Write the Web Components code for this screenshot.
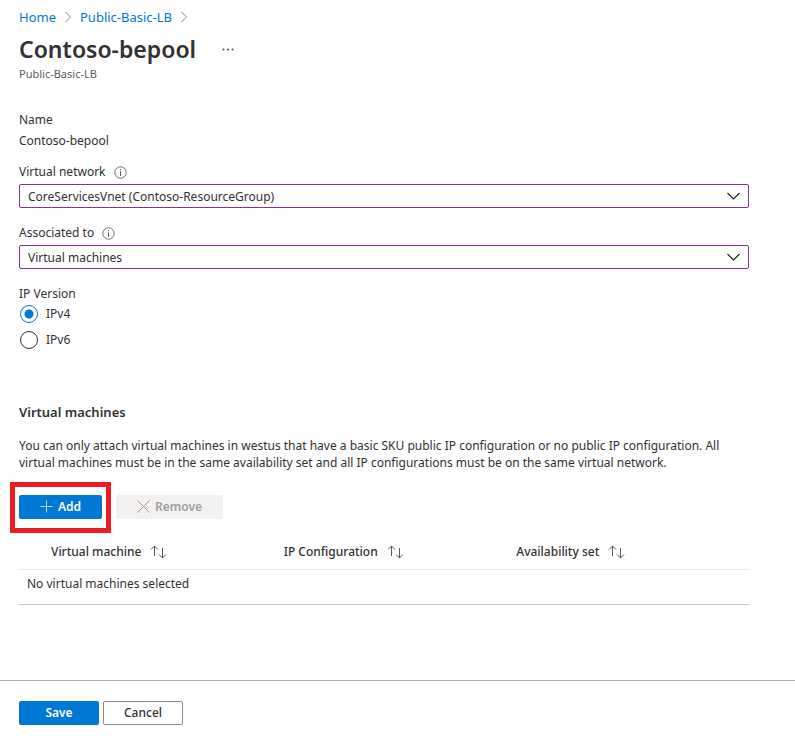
<!DOCTYPE html>
<html lang="en">
<head>
<meta charset="utf-8">
<title>Contoso-bepool</title>
<style>
  body { margin: 0; background: #fff; color: #323130; font: 12px/18px "Segoe UI", "Noto Sans", "Open Sans", sans-serif; }
</style>
</head>
<body>
<pool-page>
  <bread-crumbs slot="top" items="Home|Public-Basic-LB"></bread-crumbs>
  <page-title slot="top" subtitle="Public-Basic-LB">Contoso-bepool</page-title>
  <read-field label="Name">Contoso-bepool</read-field>
  <select-field label="Virtual network" value="CoreServicesVnet (Contoso-ResourceGroup)"></select-field>
  <select-field label="Associated to" value="Virtual machines"></select-field>
  <radio-field label="IP Version" options="IPv4|IPv6"></radio-field>
  <machine-section heading="Virtual machines">
    You can only attach virtual machines in westus that have a basic SKU public IP configuration or no public IP configuration. All virtual machines must be in the same availability set and all IP configurations must be on the same virtual network.
    <push-button slot="actions" kind="primary" icon="add" highlighted>Add</push-button>
    <push-button slot="actions" kind="off" icon="remove">Remove</push-button>
    <sort-table slot="table" columns="Virtual machine|IP Configuration|Availability set" empty="No virtual machines selected"></sort-table>
  </machine-section>
  <push-button slot="footer" kind="primary">Save</push-button>
  <push-button slot="footer" kind="outline">Cancel</push-button>
</pool-page>
<script>
class Base extends HTMLElement {
  connectedCallback() {
    if (!this.shadowRoot) this.attachShadow({ mode: "open" }).innerHTML = this.render();
  }
  list(name) { return this.getAttribute(name).split("|"); }
}

customElements.define("pool-page", class extends Base {
  render() {
    return `<style>
      :host { display: flex; flex-direction: column; min-height: 100vh; }
      header { padding: 8px 19px 0; }
      main { flex: 1; padding: 29px 46px 24px 19px; }
      footer { display: flex; gap: 4px; padding: 20px 19px 11px; border-top: 1px solid #b3b0ad; }
    </style>
    <header><slot name="top"></slot></header>
    <main><slot></slot></main>
    <footer><slot name="footer"></slot></footer>`;
  }
});

customElements.define("bread-crumbs", class extends Base {
  render() {
    const arrow = `<svg width="8" height="12" viewBox="0 0 8 12" fill="none" stroke="#8a8886" aria-hidden="true"><path d="M1.5 1 6.5 6l-5 5"/></svg>`;
    return `<style>
      :host { display: block; font-size: 13px; }
      nav { display: flex; align-items: center; gap: 8px; }
      a { color: #0078d4; text-decoration: none; }
    </style>
    <nav aria-label="Breadcrumb">${this.list("items").map(t => `<a href="#">${t}</a>${arrow}`).join("")}</nav>`;
  }
});

customElements.define("page-title", class extends Base {
  render() {
    return `<style>
      :host { display: block; padding-top: 7px; }
      div { display: flex; align-items: center; gap: 20px; margin-bottom: 1px; }
      h1 { margin: 0; font-size: 23px; line-height: 32px; font-weight: 600; }
      p { margin: 0; font-size: 11px; line-height: 16px; color: #605e5c; }
      button { display: flex; border: 0; padding: 6px; background: none; color: inherit; }
    </style>
    <div><h1><slot></slot></h1>
      <button aria-label="More"><svg width="12" height="4" viewBox="0 0 12 4" fill="#484644"><circle cx="1.5" cy="2.5" r="1"/><circle cx="6" cy="2.5" r="1"/><circle cx="10.5" cy="2.5" r="1"/></svg></button>
    </div>
    <p>${this.getAttribute("subtitle")}</p>`;
  }
});

customElements.define("read-field", class extends Base {
  render() {
    return `<style>
      :host { display: grid; gap: 3px; margin-bottom: 13px; }
    </style>
    <div>${this.getAttribute("label")}</div><div><slot></slot></div>`;
  }
});

customElements.define("select-field", class extends Base {
  render() {
    return `<style>
      :host { display: block; margin-bottom: 16px; }
      .label { display: flex; align-items: center; gap: 8px; margin-bottom: 3px; }
      .box { display: grid; align-items: center; }
      select, .box svg { grid-area: 1 / 1; }
      select { appearance: none; width: 100%; height: 24px; padding: 1px 32px 0 8px; margin: 0; border: 1px solid #8a2da5; border-radius: 2px; background: #fff; color: inherit; font: inherit; }
      .box svg { justify-self: end; margin-right: 8px; pointer-events: none; }
    </style>
    <div class="label"><label for="s">${this.getAttribute("label")}</label>
      <svg width="13" height="13" viewBox="0 0 13 13" fill="none" stroke="#605e5c" role="img" aria-label="Info"><circle cx="6.5" cy="6.5" r="5.7" stroke-width=".9"/><path d="M6.5 5.3V10M6.5 3v1.2"/></svg></div>
    <div class="box"><select id="s"><option>${this.getAttribute("value")}</option></select>
      <svg width="14" height="8" viewBox="0 0 14 8" fill="none" stroke="#201f1e" stroke-width="1.2" aria-hidden="true"><path d="M.5 1 6.500 7 12.500 1"/></svg></div>`;
  }
});

customElements.define("radio-field", class extends Base {
  render() {
    return `<style>
      :host { display: block; }
      fieldset { margin: 0; padding: 0; border: 0; }
      legend { padding: 0; margin-bottom: 2px; }
      label { display: flex; align-items: center; gap: 8px; margin-bottom: 8px; padding-left: 1px; }
      input { appearance: none; box-sizing: border-box; width: 18px; height: 18px; margin: 0; border: 1px solid #323130; border-radius: 50%; }
      input:checked { border-color: #0078d4; background: radial-gradient(circle, #0078d4 0 4px, transparent 5px); }
    </style>
    <fieldset><legend>${this.getAttribute("label")}</legend>
      ${this.list("options").map((t, i) => `<label><input type="radio" name="version" ${i ? "" : "checked"}>${t}</label>`).join("")}
    </fieldset>`;
  }
});

customElements.define("machine-section", class extends Base {
  render() {
    return `<style>
      :host { display: block; padding-top: 46px; }
      h2 { margin: 0 0 16px; font-size: 13px; line-height: 18px; font-weight: 600; }
      p { margin: 0; line-height: 17px; }
      .actions { display: flex; gap: 14px; padding: 24px 0 14px; }
    </style>
    <h2>${this.getAttribute("heading")}</h2>
    <p><slot></slot></p>
    <div class="actions"><slot name="actions"></slot></div>
    <slot name="table"></slot>`;
  }
});

customElements.define("push-button", class extends Base {
  render() {
    const icons = {
      add: `<svg width="13" height="13" viewBox="0 0 13 13" fill="none" stroke="currentColor" stroke-opacity=".7" aria-hidden="true"><path d="M6.5 .5v12M.5 6.500h12"/></svg>`,
      remove: `<svg width="13" height="13" viewBox="0 0 13 13" fill="none" stroke="currentColor" aria-hidden="true"><path d="M.5.5l12 12M12.5.5l-12 12"/></svg>`
    };
    return `<style>
      :host { display: block; position: relative; }
      button { display: flex; align-items: center; justify-content: center; gap: 5px; box-sizing: border-box; min-width: 80px; height: 24px; padding: 0 20px; border: 1px solid transparent; border-radius: 2px; font: inherit; font-weight: 600; white-space: nowrap; }
      button svg { margin-top: -2px; }
      .primary { background: #0078d4; color: #fff; }
      .off { background: #f3f2f1; color: #a19f9d; }
      .outline { padding: 0 8px; background: #fff; color: #323130; border-color: #8a8886; font-weight: 500; }
      :host([highlighted])::after { content: ""; position: absolute; inset: -13px -9px -14px; border: 5px solid #ed1c24; pointer-events: none; }
    </style>
    <button class="${this.getAttribute("kind")}" ${this.getAttribute("kind") === "off" ? "disabled" : ""}>${icons[this.getAttribute("icon")] || ""}<span><slot></slot></span></button>`;
  }
});

customElements.define("sort-table", class extends Base {
  render() {
    return `<style>
      :host { display: block; }
      table { width: 100%; table-layout: fixed; border-collapse: collapse; }
      th { padding: 2px 0 0; height: 34px; text-align: left; font-weight: 500; border-bottom: 1px solid #edebe9; }
      td { padding: 5px 8px 11px; height: 18px; border-bottom: 1px solid #c8c6c4; }
      .pick { width: 32px; padding: 0; border-bottom-color: #edebe9; }
      button { display: flex; align-items: center; gap: 9px; padding: 0; border: 0; background: none; color: inherit; font: inherit; }
    </style>
    <table><thead><tr><td class="pick"></td>
      ${this.list("columns").map(t => `<th scope="col"><button>${t}<svg width="17" height="14" viewBox="0 0 17 14" fill="none" stroke="#484644" stroke-width=".9" aria-hidden="true"><path d="M4.5 11V1M1 4.500l3.500-3.500 3.500 3.500M12.500 3v10M9 9.500l3.500 3.500 3.500-3.500"/></svg></button></th>`).join("")}
    </tr></thead><tbody><tr><td colspan="4">${this.getAttribute("empty")}</td></tr></tbody></table>`;
  }
});
</script>
</body>
</html>
